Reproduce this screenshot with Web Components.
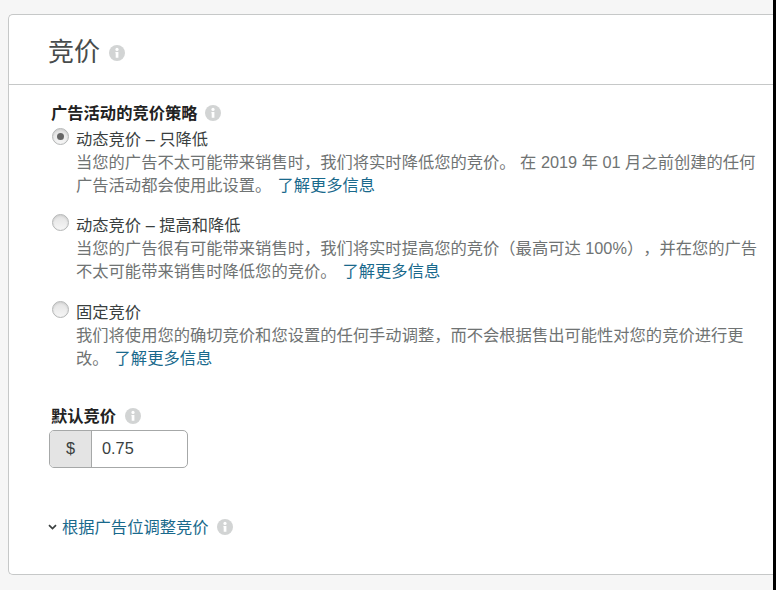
<!DOCTYPE html>
<html>
<head>
<meta charset="utf-8">
<style>
html, body { margin: 0; padding: 0; height: 590px; overflow: hidden; background: #000; }
body { font-family: "Liberation Sans", "Noto Sans CJK SC", sans-serif; text-spacing-trim: space-all; }
</style>
</head>
<body>
<bid-page></bid-page>
<template id="info-tpl">
  <style>
    :host { display: inline-flex; }
    svg { display: block; width: 16px; height: 16px; }
  </style>
  <svg viewBox="0 0 16 16"><circle cx="8" cy="8" r="8" fill="#d2d4d4"/><path d="M6.4 7h3v5.8h-2.7V8.2h-.3z" fill="#fff"/><circle cx="8" cy="4.4" r="1.6" fill="#fff"/></svg>
</template>
<script>
class InfoIcon extends HTMLElement {
    constructor() {
        super();
        this.attachShadow({ mode: 'open' }).appendChild(document.getElementById('info-tpl').content.cloneNode(true));
    }
}

class BidOption extends HTMLElement {
    constructor() {
        super();
        this.attachShadow({ mode: 'open' });
    }
    connectedCallback() {
        const checked = this.hasAttribute('checked');
        this.shadowRoot.innerHTML = `
        <style>
            :host { display: grid; grid-template-columns: 17px 682px; column-gap: 7px; margin-left: 1px; }
            .radio { width: 17px; height: 17px; box-sizing: border-box; border-radius: 50%; border: 1px solid #b4b6b6;
                background: linear-gradient(#e2e2e2, #f6f6f6); display: flex; align-items: center; justify-content: center; box-shadow: inset 0 1px 2px #cdcdcd; }
            .radio i { width: 7px; height: 7px; border-radius: 50%; background: #666; }
            .label { font-size: 16.3px; line-height: 23px; color: #3a3f3f; }
            .desc { grid-column: 2; font-size: 16.3px; line-height: 23px; color: #6f7373; }
            ::slotted(a) { color: #19698c; text-decoration: none; margin-left: 6px; }
        </style>
        <span class="radio">${checked ? '<i></i>' : ''}</span>
        <div class="label">${this.getAttribute('label')}</div>
        <div class="desc"><slot></slot></div>`;
    }
}

class BidPage extends HTMLElement {
    constructor() {
        super();
        this.attachShadow({ mode: 'open' });
    }
    connectedCallback() {
        this.shadowRoot.innerHTML = `
        <style>
            :host { display: block; width: 773px; height: 590px; box-sizing: border-box; background: #f6f6f6; padding: 14px 0 15px 8px; }
            .card { height: 100%; box-sizing: border-box; background: #fff; border: 1px solid #c6c8c8; border-right: 0; border-radius: 5px 0 0 5px; display: flex; flex-direction: column; }
            header { height: 70px; box-sizing: border-box; border-bottom: 1px solid #c6c8c8; display: flex; align-items: center; gap: 9px; padding: 6px 0 0 39px; }
            h1 { margin: -6px 0 0; font-size: 26px; font-weight: 400; color: #484c4c; }
            .body { padding: 18px 0 0 42px; display: flex; flex-direction: column; }
            .head { display: flex; align-items: center; gap: 7px; font-size: 16.3px; line-height: 20px; font-weight: 700; color: #222; }
            .options { display: flex; flex-direction: column; gap: 17px; margin-top: 5px; }
            .options bid-option:last-child { margin-top: 1px; }
            .bid { margin-top: 36px; gap: 9px; }
            .field { display: flex; width: 139px; height: 38px; box-sizing: border-box; margin: 4px 0 0 -2px; border: 1px solid #a6a8a8; border-radius: 5px; overflow: hidden; font-size: 16.3px; color: #3a3f3f; }
            .field b { font-weight: 400; width: 41px; background: #e4e4e4; border-right: 1px solid #a6a8a8; display: flex; align-items: center; justify-content: center; padding-bottom: 1px; }
            .field span { padding: 0 0 1px 10px; display: flex; align-items: center; }
            .toggle { display: flex; align-items: center; margin: 49px 0 0 -3px; font-size: 16.3px; line-height: 20px; color: #19698c; }
            .toggle svg { width: 9px; height: 6px; margin-right: 5px; }
            .toggle info-icon { margin-left: 8px; }
        </style>
        <div class="card">
            <header><h1>竞价</h1><info-icon></info-icon></header>
            <div class="body">
                <div class="head">广告活动的竞价策略 <info-icon></info-icon></div>
                <div class="options">
                    <bid-option checked label="动态竞价 – 只降低">当您的广告不太可能带来销售时，我们将实时降低您的竞价。 在 2019 年 01 月之前创建的任何广告活动都会使用此设置。<a href="#">了解更多信息</a></bid-option>
                    <bid-option label="动态竞价 – 提高和降低">当您的广告很有可能带来销售时，我们将实时提高您的竞价（最高可达 100%），并在您的广告不太可能带来销售时降低您的竞价。<a href="#">了解更多信息</a></bid-option>
                    <bid-option label="固定竞价">我们将使用您的确切竞价和您设置的任何手动调整，而不会根据售出可能性对您的竞价进行更改。<a href="#">了解更多信息</a></bid-option>
                </div>
                <div class="head bid">默认竞价 <info-icon></info-icon></div>
                <div class="field"><b>$</b><span>0.75</span></div>
                <div class="toggle"><svg viewBox="0 0 9 6"><path d="M1 1.2 4.5 4.6 8 1.2" fill="none" stroke="#3a3f3f" stroke-width="1.7"/></svg>根据广告位调整竞价<info-icon></info-icon></div>
            </div>
        </div>`;
    }
}

customElements.define('info-icon', InfoIcon);
customElements.define('bid-option', BidOption);
customElements.define('bid-page', BidPage);
</script>
</body>
</html>
